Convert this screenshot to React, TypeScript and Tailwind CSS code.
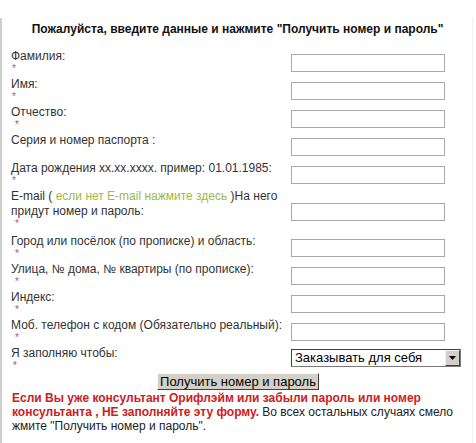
import React from "react"

type Row = {
  label: React.ReactNode
  h: string
  star?: string
  kind?: "input" | "select"
}

const rows: Row[] = [
  { label: "Фамилия:", h: "h-[28px]", star: "ml-[1px]" },
  { label: "Имя:", h: "h-[28px]", star: "ml-[1px]" },
  { label: "Отчество:", h: "h-[28px]", star: "ml-[4px]" },
  { label: "Серия и номер паспорта :", h: "h-[28px]" },
  { label: "Дата рождения xx.xx.xxxx. пример: 01.01.1985:", h: "h-[28px]", star: "ml-[1px]" },
  {
    label: (
      <>
        E-mail ( <span className="text-[#a0b848]">если нет E-mail нажмите здесь</span> )На него
        <br />
        придут номер и пароль:
      </>
    ),
    h: "h-[45px]",
    star: "ml-[4px]",
  },
  { label: "Город или посёлок (по прописке) и область:", h: "h-[28px]", star: "ml-[4px]" },
  { label: "Улица, № дома, № квартиры (по прописке):", h: "h-[28px]", star: "ml-[4px]" },
  { label: "Индекс:", h: "h-[28px]", star: "ml-[4px]" },
  { label: "Моб. телефон с кодом (Обязательно реальный):", h: "h-[28px]", star: "ml-[4px]" },
  { label: "Я заполняю чтобы:", h: "h-[28px]", star: "ml-[2px]", kind: "select" },
]

function SelectBox() {
  return (
    <div className="mt-[2px] flex h-[18px] w-[170px] items-stretch border border-[#7a7a7a] border-t-[#404040] border-l-[#404040] bg-white">
      <span className="flex-1 pl-[3px] text-[13px] leading-[15px] text-black">Заказывать для себя</span>
      <span className="flex w-[15px] items-center justify-center border border-[#f4f4f4] border-r-[#404040] border-b-[#404040] bg-[#d4d0c8]">
        <svg width="7" height="4" viewBox="0 0 7 4">
          <path d="M0 0h7L3.5 4z" fill="#000" />
        </svg>
      </span>
    </div>
  )
}

export default function App() {
  return (
    <div className="h-[443px] w-[476px] bg-white pt-[18px] font-['Liberation_Sans',Arial,sans-serif]">
      <div className="h-[425px] w-[473px] border-l-2 border-r border-l-[#cfcfcf] border-r-[#f0f0f0] pl-[9px] pr-[8px]">
        <h1 className="pt-[4px] text-center text-[12px] font-bold leading-[14px] text-[#111]">
          Пожалуйста, введите данные и нажмите "Получить номер и пароль"
        </h1>
        <div className="mt-[13px] flex flex-col">
          {rows.map((row, i) => (
            <div key={i} className={`flex ${row.h}`}>
              <div className="w-[280px] whitespace-nowrap text-[12px] leading-[15px] text-[#333]">
                <div>{row.label}</div>
                {row.star ? (
                  <div className={`${row.star} text-[10px] leading-[10px] text-[#c0506a]`}>*</div>
                ) : null}
              </div>
              <div className="flex flex-1 items-center">
                {row.kind === "select" ? (
                  <div className="self-start pt-[1px]">
                    <SelectBox />
                  </div>
                ) : (
                  <div className="h-[18px] w-[154px] border border-[#a9a9a9] bg-white" />
                )}
              </div>
            </div>
          ))}
        </div>
        <div className="-mt-[1px] flex justify-center">
          <button
            type="button"
            className="ml-[1px] h-[17px] w-[162px] border border-[#f8f8f8] border-r-[#404040] border-b-[#404040] bg-[#d4d0c8] text-[13px] leading-[13px] text-black"
          >
            Получить номер и пароль
          </button>
        </div>
        <p className="mt-[1px] pl-[1px] text-[12px] leading-[14px] text-[#222]">
          <b className="text-[#cc2020]">
            Если Вы уже консультант Орифлэйм или забыли пароль или номер консультанта , НЕ заполняйте эту форму.
          </b>{" "}
          Во всех остальных случаях смело жмите "Получить номер и пароль".
        </p>
      </div>
    </div>
  )
}
